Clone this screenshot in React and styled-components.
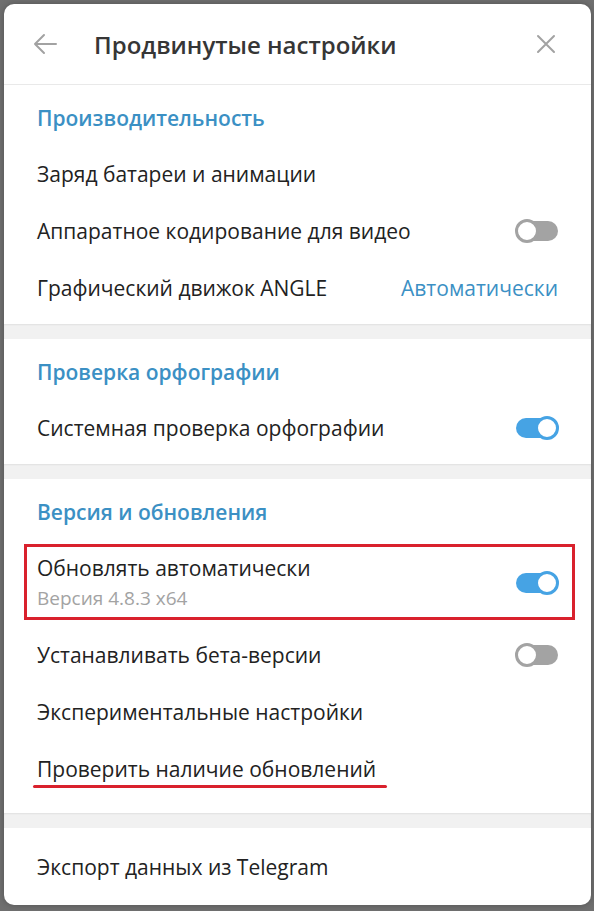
import React from "react";
import styled, { createGlobalStyle } from "styled-components";

const GlobalStyle = createGlobalStyle`
  * { box-sizing: border-box; }
  html, body { margin: 0; padding: 0; }
  body {
    background: #6f6f6f;
    font-family: "Open Sans", "Noto Sans", sans-serif;
    -webkit-font-smoothing: antialiased;
  }
`;

const Page = styled.div`
  padding: 4px 3px 6px 4px;
  min-height: 911px;
`;

const Panel = styled.div`
  width: 587px;
  height: 901px;
  background: #ffffff;
  border-radius: 10px;
  overflow: hidden;
  display: flex;
  flex-direction: column;
  box-shadow: 0 0 6px rgba(0, 0, 0, 0.25);
`;

const Header = styled.div`
  height: 81px;
  flex-shrink: 0;
  display: flex;
  align-items: center;
  padding: 0 30px 0 26px;
  border-bottom: 1px solid #e9e9e9;
`;

const Title = styled.h1`
  flex: 1;
  margin: 0 0 0 34px;
  font-size: 24px;
  font-weight: 600;
  color: #363636;
`;

const IconButton = styled.div`
  width: 30px;
  height: 30px;
  display: flex;
  align-items: center;
  justify-content: center;
  color: #a2a2a2;
`;

const Section = styled.div`
  padding-top: ${(p) => (p.$top !== undefined ? p.$top : 14)}px;
  padding-bottom: ${(p) => p.$bottom || 8}px;
`;

const SectionTitle = styled.div`
  height: 38px;
  margin-bottom: 8px;
  padding: 0 33px;
  display: flex;
  align-items: center;
  font-size: 21px;
  font-weight: 600;
  color: #3b90c4;
`;

const Row = styled.div`
  position: relative;
  height: ${(p) => p.$height || 57}px;
  padding: 0 33px;
  display: flex;
  align-items: center;
  justify-content: space-between;
`;

const Label = styled.div`
  display: flex;
  flex-direction: column;
  gap: 3px;
`;

const Text = styled.span`
  font-size: 21px;
  color: #222222;
`;

const SubText = styled.span`
  font-size: 19px;
  color: #a3a3a3;
`;

const Value = styled.span`
  font-size: 21px;
  color: #3b90c4;
`;

const Divider = styled.div`
  height: 15px;
  flex-shrink: 0;
  background: #f1f1f1;
  box-shadow: inset 0 1px 2px rgba(0, 0, 0, 0.07);
`;

const Toggle = styled.div`
  position: relative;
  width: 44px;
  height: 24px;
  margin-right: -1px;
`;

const Track = styled.div`
  position: absolute;
  left: 1px;
  right: 1px;
  top: 2px;
  height: 20px;
  border-radius: 10px;
  background: ${(p) => (p.$on ? "#46a3e4" : "#a3a3a3")};
`;

const Knob = styled.div`
  position: absolute;
  top: 0;
  ${(p) => (p.$on ? "right: 0;" : "left: 0;")}
  width: 24px;
  height: 24px;
  border-radius: 50%;
  background: #ffffff;
  border: 3px solid ${(p) => (p.$on ? "#46a3e4" : "#a3a3a3")};
`;

const Highlight = styled.div`
  position: absolute;
  left: 20px;
  right: 16px;
  top: 5px;
  bottom: 6px;
  border: 3px solid #d9212d;
`;

const Underline = styled.div`
  position: absolute;
  left: 29px;
  width: 354px;
  bottom: 9px;
  height: 3px;
  border-radius: 2px;
  background: #d9212d;
`;

const Switch = ({ on }) => (
  <Toggle>
    <Track $on={on} />
    <Knob $on={on} />
  </Toggle>
);

const BackIcon = () => (
  <svg width="26" height="22" viewBox="0 0 26 22" fill="none">
    <path d="M24 11H3M12 2L3 11l9 9" stroke="currentColor" strokeWidth="2" strokeLinecap="round" strokeLinejoin="round" />
  </svg>
);

const CloseIcon = () => (
  <svg width="20" height="20" viewBox="0 0 20 20" fill="none">
    <path d="M2 2l16 16M18 2L2 18" stroke="currentColor" strokeWidth="2" strokeLinecap="round" />
  </svg>
);

export default function App() {
  return (
    <>
      <GlobalStyle />
      <Page>
        <Panel>
          <Header>
            <IconButton>
              <BackIcon />
            </IconButton>
            <Title>Продвинутые настройки</Title>
            <IconButton>
              <CloseIcon />
            </IconButton>
          </Header>

          <Section>
            <SectionTitle>Производительность</SectionTitle>
            <Row>
              <Text>Заряд батареи и анимации</Text>
            </Row>
            <Row>
              <Text>Аппаратное кодирование для видео</Text>
              <Switch on={false} />
            </Row>
            <Row>
              <Text>Графический движок ANGLE</Text>
              <Value>Автоматически</Value>
            </Row>
          </Section>
          <Divider />

          <Section>
            <SectionTitle>Проверка орфографии</SectionTitle>
            <Row>
              <Text>Системная проверка орфографии</Text>
              <Switch on />
            </Row>
          </Section>
          <Divider />

          <Section $bottom={16}>
            <SectionTitle>Версия и обновления</SectionTitle>
            <Row $height={87}>
              <Label>
                <Text>Обновлять автоматически</Text>
                <SubText>Версия 4.8.3 x64</SubText>
              </Label>
              <Switch on />
              <Highlight />
            </Row>
            <Row>
              <Text>Устанавливать бета-версии</Text>
              <Switch on={false} />
            </Row>
            <Row>
              <Text>Экспериментальные настройки</Text>
            </Row>
            <Row>
              <Text>Проверить наличие обновлений</Text>
              <Underline />
            </Row>
          </Section>
          <Divider />

          <Section $top={10}>
            <Row>
              <Text>Экспорт данных из Telegram</Text>
            </Row>
          </Section>
        </Panel>
      </Page>
    </>
  );
}
